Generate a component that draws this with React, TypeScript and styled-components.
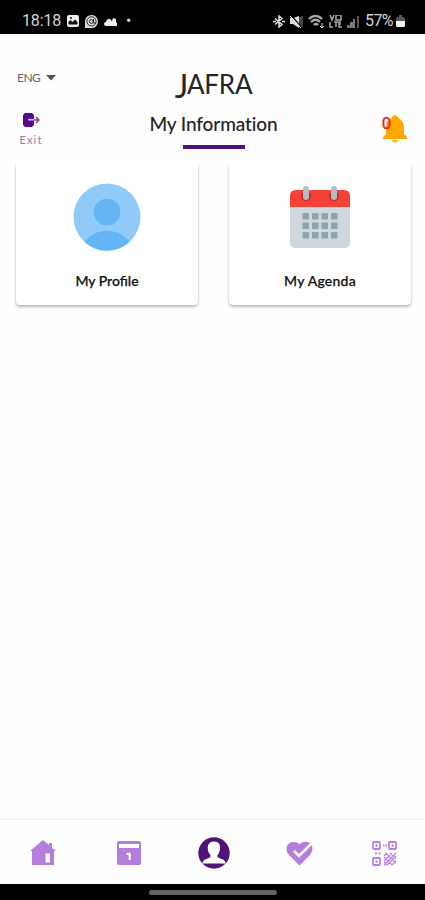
import React from "react";
import styled, { createGlobalStyle } from "styled-components";

const Global = createGlobalStyle`
  * { box-sizing: border-box; }
  body { margin: 0; background: #fefefe; font-family: Lato, "Open Sans", sans-serif; }
  svg { display: block; flex: none; }
`;
const Screen = styled.div`
  width: 425px; height: 900px; display: flex; flex-direction: column;
  overflow: hidden; background: #fefefe;
`;
const StatusBar = styled.div`
  height: 34px; flex: none; background: #000; color: #d4d4d4;
  display: flex; align-items: center; justify-content: space-between;
  padding: 8px 20px 0 22px;
`;
const StatusGroup = styled.div<{ $gap: number }>`
  display: flex; align-items: center; gap: ${p => p.$gap}px;
`;
const StatusText = styled.span<{ $width: number; $spacing: number }>`
  font: 400 16px/20px Roboto, sans-serif; width: ${p => p.$width}px;
  letter-spacing: ${p => p.$spacing}px; white-space: nowrap;
`;
const Header = styled.header`
  height: 130px; flex: none; display: grid;
  grid-template-columns: 60px 1fr 60px;
`;
const LeftTools = styled.div`
  padding: 36px 0 0 17px; display: flex; flex-direction: column; align-items: flex-start;
`;
const Language = styled.button`
  height: 16px; padding: 0; border: 0; background: none; color: #626262;
  display: flex; align-items: center; gap: 6px;
  font: 400 12px/16px Lato, sans-serif; letter-spacing: -0.5px;
`;
const ExitButton = styled.button`
  margin: 27px 0 0 1px; padding: 0; border: 0; background: none; color: #917cac; width: 26px;
  display: flex; flex-direction: column; align-items: center; gap: 6px;
  font: 400 11px/14px Lato, sans-serif; letter-spacing: 1.2px;
`;
const Titles = styled.div`
  display: flex; flex-direction: column; align-items: center; padding-top: 37px;
`;
const Brand = styled.div`
  height: 30px; display: flex; align-items: flex-start; margin-left: 2px; color: #252525;
  font: 400 26px/26px Lato, sans-serif; letter-spacing: -0.2px;
`;
const BrandInitial = styled.span`
  font: 400 32px/30px Lato, sans-serif; margin-right: -1px;
`;
const Title = styled.h1`
  margin: 11px 0 0 2px; font: 500 19px/24px Lato, sans-serif; color: #222; letter-spacing: -0.1px;
  white-space: nowrap;
`;
const Underline = styled.div`
  width: 62px; height: 4px; margin: 9px 0 0 2px; background: #501086;
`;
const Bell = styled.div`
  position: relative; width: 28px; height: 32px; margin: 80px 0 0 17px;
`;
const BellCount = styled.span`
  position: absolute; left: 0; top: 0; color: #e92620;
  font: 400 16px/20px "Liberation Sans", sans-serif; -webkit-text-stroke: 0.5px #e92620;
`;
const Content = styled.main`
  flex: 1; overflow: hidden; display: grid; grid-template-columns: 182px 182px;
  gap: 31px; align-content: start; padding: 0 14px 0 16px;
`;
const Card = styled.section`
  height: 141px; border-radius: 0 0 4px 4px; background: #fff;
  box-shadow: 0 2px 3px rgba(0,0,0,.25), 0 0 2px rgba(0,0,0,.1);
  display: flex; flex-direction: column; align-items: center; padding-top: 19px;
`;
const CardLabel = styled.span<{ $spacing: number }>`
  margin-top: 20px; font: 500 14px/20px Lato, sans-serif; color: #111;
  -webkit-text-stroke: 0.25px #111; letter-spacing: ${p => p.$spacing}px;
`;
const Navigation = styled.nav`
  height: 66px; flex: none; border-top: 2px solid #f5f5f5; padding: 2px 0 0;
  display: grid; grid-template-columns: 86px 85px 85px 86px 84px; align-items: center; justify-items: center;
`;
const GestureBar = styled.div`
  height: 16px; flex: none; background: #000; display: flex; justify-content: center; align-items: center;
  padding-top: 1px;
`;
const GesturePill = styled.div`
  width: 128px; height: 5px; border-radius: 3px; background: #636363;
`;

const Picture = () => <svg width="12" height="12" viewBox="0 0 12 12"><rect width="12" height="12" rx="2" fill="#eee"/><path d="M1.5 9.5V7l2-2 2 2L8 4.5 10.5 7v2.5z" fill="#111"/><circle cx="4" cy="3" r="1" fill="#111"/></svg>;
const Message = () => <svg width="15" height="15" viewBox="0 0 15 15"><path d="M1 14V7A6.5 6.5 0 1 1 7.5 14z" fill="#ddd"/><circle cx="7.5" cy="7.4" r="4.6" fill="none" stroke="#222"/><circle cx="7.3" cy="7.5" r="1.9" fill="none" stroke="#222"/><path d="M9.5 5v4l2 .2" fill="none" stroke="#222"/></svg>;
const Cloud = () => <svg width="13" height="9" viewBox="0 0 13 9"><path d="M2 9a2 2 0 0 1 0-4 3 3 0 0 1 4-3l2 2 1-3 3 1v3l1 1v3z" fill="#eee"/></svg>;
const Bluetooth = () => <svg width="12" height="13" viewBox="0 0 12 13" fill="none" stroke="#ddd" strokeWidth="1.5"><path d="m2 3.5 7 6-3 2.5V1l3 2.5-7 6M0 6.5h3m6 0h3"/></svg>;
const Muted = () => <svg width="13" height="13" viewBox="0 0 13 13"><path d="M0 3h3l6-2v12L3 9H0z" fill="#ddd"/><path d="M10 2v9M12 1v11" stroke="#888"/><path d="m1 0 11 13" stroke="#000" strokeWidth="1.2"/><path d="m0 1 11 12" stroke="#eee"/></svg>;
const Wifi = () => <svg width="16" height="13" viewBox="0 0 16 13" fill="none" stroke="#aaa" strokeWidth="2.4"><path d="M1 4c4-4 9-4 13 0M3 7c3-3 6-3 9 0M6 10q2-2 4 0"/><path d="M14 8v5m-2-2 2 2 2-2" stroke="#ddd" strokeWidth="1"/></svg>;
const Volte = () => <svg width="13" height="13" viewBox="0 0 13 13" fill="none" stroke="#aaa" strokeWidth="1.5"><path d="m1 0 2 5 2-5m2 0v5h5V0H7M1 7v5h3m1-5h4m-2 0v5m5-5h-2v5h3m-3-3h2"/></svg>;
const Signal = () => <svg width="13" height="13" viewBox="0 0 13 13"><path d="M0 13V10h3V7h3V4h2v9z" fill="#777"/><path d="M10 1h2v12h-2z" fill="#555"/></svg>;
const Battery = () => <svg width="9" height="12" viewBox="0 0 9 12"><path d="M1 2h2V0h3v2h2l1 2v8H0V4z" fill="#555"/><path d="M0 6h9v5l-1 1H1l-1-1z" fill="#eee"/></svg>;
const Caret = () => <svg width="10" height="6" viewBox="0 0 10 6"><path d="M0 0h10L5 5.5z" fill="#555"/></svg>;
const Exit = () => <svg width="17" height="14" viewBox="0 0 17 14"><path d="M2 0h7l2 2v10l-2 2H2L0 12V2z" fill="#530b91"/><path d="M5 6.7h7" stroke="#d7c0e8" strokeWidth="1.6"/><path d="M11 7h4m-2-3 3 3-3 3" fill="none" stroke="#70469a" strokeWidth="1.5"/></svg>;

const Profile = () => <svg width="68" height="68" viewBox="0 0 68 68"><circle cx="34" cy="34" r="33.5" fill="#90caf9"/><circle cx="34" cy="29" r="13.3" fill="#64b5f6"/><path d="M11.5 59C23 44 45 44 56.5 59a33.5 33.5 0 0 1-45 0z" fill="#64b5f6"/></svg>;
const Agenda = () => <svg width="62" height="68" viewBox="0 0 62 68"><path d="M1 22h60v37q0 6-6 6H7q-6 0-6-6z" fill="#cfd8dc"/><path d="M7 7h48q6 0 6 6v11H1V13q0-6 6-6z" fill="#f44336"/><circle cx="17" cy="13" r="5" fill="#c62828"/><circle cx="45" cy="13" r="5" fill="#c62828"/><path d="M17 6v8M45 6v8" stroke="#b0bec5" strokeWidth="6" strokeLinecap="round"/><g fill="#90a4ae">{[30, 39.5, 49].flatMap(y => [13.5, 23, 32.5, 42].map(x => <rect key={`${x}-${y}`} x={x} y={y} width="6.5" height="6.5"/>))}</g></svg>;
const BellIcon = () => <svg width="28" height="32" viewBox="0 0 28 32"><path d="M1 25v-2l3-3v-7c0-5 3-8 6-9V3q3-4 6 0v1c4 2 6 5 6 10v6l3 3v2z" fill="#ffa800"/><path d="M9 26h8q-4 5-8 0z" fill="#ffb62e"/></svg>;
const Home = () => <svg width="26" height="27" viewBox="0 0 26 27"><path d="M0 11 13 0l6 5V3h3v5l4 3H24v14H2V11z" fill="#b57edc"/><path d="M15.5 13.5h4.5v9h-4.5z" fill="#fff"/></svg>;
const Calendar = () => <svg width="24" height="24" viewBox="0 0 24 24"><rect width="24" height="24" rx="2" fill="#b57edc"/><path d="M2 3h20v4H2z" fill="#fff"/><path d="M9.5 12.8h3.2v6.2" fill="none" stroke="#fff" strokeWidth="2.2"/></svg>;
const Person = () => <svg width="32" height="32" viewBox="0 0 32 32"><circle cx="16" cy="16" r="15.7" fill="#501477"/><path d="M16 4.5c4.6 0 6.5 3 6 7.5-.3 3-1.4 5-2.5 6.2v2L26 23l2 3.5H4L6 23l6.5-2.8v-2C11 16.5 10 14.5 9.8 12 9.4 7.5 11.5 4.5 16 4.5z" fill="#fff"/></svg>;
const Heart = () => <svg width="27" height="25" viewBox="0 0 27 25"><path d="M13.5 24.5 3 14C-2 8 1 1 7 1q4 0 6.5 2Q17 0 22 1c5 2 6 8 2 13z" fill="#b57edc"/><path d="m8 10 5 5L25 3" fill="none" stroke="#fff" strokeWidth="2.5"/></svg>;
const Qr = () => <svg width="25" height="25" viewBox="0 0 25 25" fill="none" stroke="#b57edc"><g strokeWidth="1.8"><rect x="1" y="1" width="7" height="7" rx="1"/><rect x="17" y="1" width="7" height="7" rx="1"/><rect x="1" y="17" width="7" height="7" rx="1"/></g><path d="M3.5 4.5h2m14 0h2m-18 16h2" strokeWidth="2.4"/><path d="M11 4.5h1.5m1 0H15M3 12.5h2m1.5 0h2" strokeWidth="1.8"/><path d="m12 15 3-3m-3 8 8-8m-8 12 12-12m-9 12 9-9m-4 9 4-4M12 16l8 8m-8-3 3 3m-1-12 10 10m-6-10 6 6" strokeWidth="1.15"/></svg>;

export default function App() {
  return <><Global/><Screen>
    <StatusBar>
      <StatusGroup $gap={5}><StatusText $width={40} $spacing={-.15}>18:18</StatusText><Picture/><Message/><Cloud/><StatusText $width={8} $spacing={0}>&nbsp;•</StatusText></StatusGroup>
      <StatusGroup $gap={5}><Bluetooth/><Muted/><Wifi/><Volte/><Signal/><StatusGroup $gap={1}><StatusText $width={30} $spacing={-.6}>57%</StatusText><Battery/></StatusGroup></StatusGroup>
    </StatusBar>
    <Header>
      <LeftTools><Language>ENG <Caret/></Language><ExitButton><Exit/>Exit</ExitButton></LeftTools>
      <Titles><Brand><BrandInitial>J</BrandInitial>AFRA</Brand><Title>My Information</Title><Underline/></Titles>
      <Bell><BellIcon/><BellCount>0</BellCount></Bell>
    </Header>
    <Content>
      <Card><Profile/><CardLabel $spacing={0}>My Profile</CardLabel></Card>
      <Card><Agenda/><CardLabel $spacing={.25}>My Agenda</CardLabel></Card>
    </Content>
    <Navigation><Home/><Calendar/><Person/><Heart/><Qr/></Navigation>
    <GestureBar><GesturePill/></GestureBar>
  </Screen></>;
}
